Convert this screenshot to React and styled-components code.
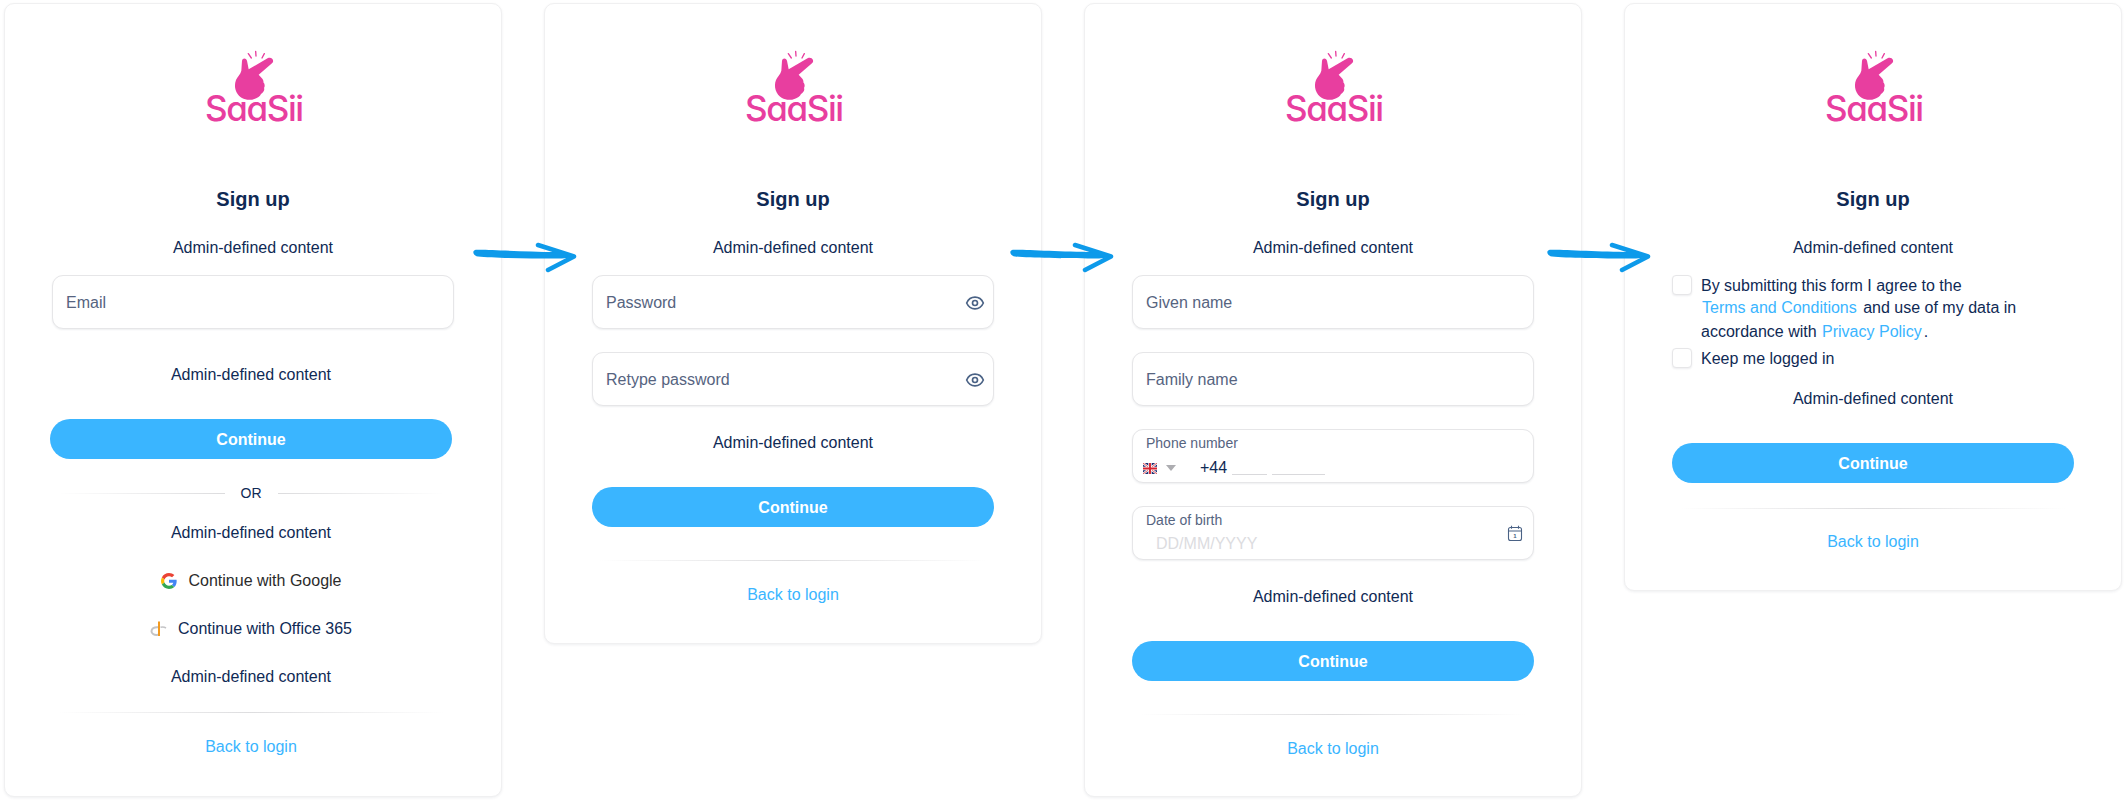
import React from "react";
import styled, { createGlobalStyle } from "styled-components";

const Global = createGlobalStyle`
  html, body { margin: 0; padding: 0; background: #fff; }
  body { font-family: "Liberation Sans", Arial, sans-serif; color: #0f2a55; }
  * { box-sizing: border-box; }
`;

const Page = styled.div`
  position: relative;
  display: flex;
  align-items: flex-start;
  gap: 42px;
  width: 2126px;
  height: 803px;
  padding: 3px 0 0 4px;
  overflow: hidden;
`;

const Card = styled.section`
  width: 498px;
  height: ${(p) => p.$h}px;
  flex: none;
  display: flex;
  flex-direction: column;
  padding: 0 47px;
  background: #fff;
  border: 1px solid #f0f0f1;
  border-radius: 10px;
  box-shadow: 0 1px 3px rgba(20, 30, 60, 0.07);
`;

const LogoBox = styled.div`
  margin-top: 46px;
  height: 72px;
  padding-left: 4px;
  display: flex;
  justify-content: center;
`;

const LogoInner = styled.div`
  position: relative;
  width: 150px;
  height: 90px;
  margin-top: -10px;
  flex: none;
`;

const LogoWord = styled.span`
  position: absolute;
  left: 25px;
  top: 46px;
  font-family: Inter, "Liberation Sans", sans-serif;
  font-feature-settings: "cv11" 1;
  font-size: 35px;
  line-height: 44px;
  font-weight: 500;
  letter-spacing: -1.4px;
  color: #e83e9f;
`;

const Title = styled.h1`
  margin: 63px 0 0;
  height: 28px;
  font-size: 20px;
  line-height: 28px;
  font-weight: 700;
  text-align: center;
  color: #0f2a55;
`;

const Note = styled.p`
  margin: ${(p) => p.$mt ?? 25}px 0 0;
  height: 20px;
  font-size: 16px;
  line-height: ${(p) => (p.$low ? 22 : 20)}px;
  text-align: center;
  color: #0f2a55;
`;

const Shifted = styled.div`
  display: flex;
  flex-direction: column;
  margin: 0 2px 0 -2px;
`;

const Field = styled.div`
  margin-top: ${(p) => p.$mt ?? 17}px;
  height: 54px;
  padding: 2px 13px 0;
  display: flex;
  align-items: center;
  justify-content: space-between;
  background: #fff;
  border: 1px solid #e6e6e8;
  border-radius: 11px;
  box-shadow: 0 1px 2px rgba(20, 30, 60, 0.07);
  font-size: 16px;
  color: #56647f;
`;

const Stacked = styled(Field)`
  display: grid;
  grid-template-columns: 1fr auto;
  align-content: start;
  align-items: start;
  padding-top: 5px;
`;

const Label = styled.div`
  grid-column: 1;
  height: 16px;
  font-size: 14px;
  line-height: 16px;
  color: #56647f;
`;

const PhoneRow = styled.div`
  grid-column: 1;
  margin: 7px 0 0 -3px;
  height: 20px;
  display: flex;
  align-items: center;
`;

const Caret = styled.span`
  width: 0;
  height: 0;
  margin: 0 24px 0 9px;
  border-left: 5px solid transparent;
  border-right: 5px solid transparent;
  border-top: 6px solid #adadb1;
`;

const Dial = styled.span`
  font-size: 16px;
  line-height: 20px;
  color: #0f2a55;
`;

const Blank = styled.span`
  width: ${(p) => p.$w}px;
  height: 1px;
  margin: 12px 0 0 ${(p) => p.$ml}px;
  background: #d9d9dc;
`;

const DateHint = styled.div`
  grid-column: 1;
  margin: 6px 0 0 10px;
  height: 20px;
  font-size: 16px;
  line-height: 20px;
  color: #dcdcdf;
`;

const CalendarSlot = styled.div`
  grid-column: 2;
  grid-row: 1 / span 2;
  margin-top: 13px;
  margin-right: -3px;
`;

const Cta = styled.button`
  margin-top: ${(p) => p.$mt ?? 35}px;
  height: 40px;
  width: 100%;
  padding: 2px 0 0;
  border: 0;
  border-radius: 20px;
  background: #3ab5ff;
  color: #fff;
  font-family: inherit;
  font-size: 16px;
  font-weight: 700;
`;

const OrRow = styled.div`
  margin: 24px 8px 0;
  height: 20px;
  display: flex;
  align-items: center;
  gap: 16px;
  font-size: 14px;
  color: #0f2a55;
`;

const OrLine = styled.span`
  flex: 1;
  height: 1px;
  background: linear-gradient(${(p) => (p.$flip ? "to left" : "to right")}, rgba(220, 220, 222, 0), #dcdcde);
`;

const Provider = styled.div`
  margin-top: 28px;
  height: 20px;
  padding-top: 2px;
  display: flex;
  align-items: center;
  justify-content: center;
  gap: ${(p) => p.$gap}px;
  font-size: 16px;
  line-height: 20px;
  color: ${(p) => p.$color};
`;

const Rule = styled.div`
  margin: ${(p) => p.$mt}px 8px 0;
  height: 1px;
  flex: none;
  background: linear-gradient(to right, rgba(220, 220, 222, 0), #dddddf 50%, rgba(220, 220, 222, 0));
`;

const Back = styled.a`
  display: block;
  margin-top: ${(p) => p.$mt ?? 23}px;
  height: 20px;
  font-size: 16px;
  line-height: 22px;
  text-align: center;
  color: #3ab5ff;
`;

const CheckRow = styled.div`
  margin-top: ${(p) => p.$mt}px;
  display: flex;
  align-items: flex-start;
  gap: 9px;
  font-size: 16px;
  line-height: 22px;
  color: #0f2a55;
`;

const Box = styled.span`
  flex: none;
  width: 20px;
  height: 20px;
  background: #fff;
  border: 1px solid #e6e6e8;
  border-radius: 4px;
  box-shadow: 0 1px 2px rgba(20, 30, 60, 0.08);
`;

const Terms = styled.div`
  flex: 1;
`;

const TermLink = styled.a`
  display: inline-block;
  margin: 0 2px 0 1px;
  padding-top: ${(p) => p.$top ?? 0}px;
  color: #3ab5ff;
`;

const ArrowSlot = styled.div`
  position: absolute;
  left: ${(p) => p.$x}px;
  top: 238px;
  width: 110px;
  height: 38px;
`;

const EyeIcon = styled.svg`
  flex: none;
  margin-right: -5px;
`;

const Logo = () => (
  <LogoInner>
    <svg width="150" height="90" viewBox="0 0 450 270" fill="none">
      <path
        fill="#e83e9f"
        d="M186 62C188 53 198 53 201 62L206 88L264 54C275 49 285 62 276 70L236 104L247 116C250 120 251 124 250 127C255 132 255 140 252 144C255 150 250 158 243 162C240 170 232 174 225 176C212 182 196 180 186 174C168 164 160 140 168 120C172 110 182 102 184 92Z"
      />
      <path stroke="#e83e9f" strokeWidth="4" strokeLinecap="round" d="M205 41L214 54M227 34L228 48M253 41L246 54" />
    </svg>
    <LogoWord>SaaSii</LogoWord>
  </LogoInner>
);

const Eye = () => (
  <EyeIcon width="20" height="20" viewBox="0 0 24 24" fill="none" stroke="#4a6285" strokeWidth="2">
    <path d="M2 12C4 7.5 7.5 5 12 5s8 2.5 10 7c-2 4.5-5.5 7-10 7s-8-2.5-10-7Z" />
    <circle cx="12" cy="12" r="3" />
  </EyeIcon>
);

const Calendar = () => (
  <svg width="16" height="17" viewBox="0 0 16 17" fill="none" stroke="#4a6285" strokeWidth="1.1">
    <rect x="1.5" y="2.5" width="13" height="13" rx="2" />
    <path d="M1.5 6h13M4.5 .8v3M11.5 .8v3" />
    <text x="8" y="13.4" textAnchor="middle" fontSize="6" fontWeight="700" fill="#4a6285" stroke="none" fontFamily="Liberation Sans">1</text>
  </svg>
);

const Flag = () => (
  <svg width="14" height="11" viewBox="0 0 14 11">
    <rect width="14" height="11" fill="#1f2f73" />
    <path d="M0 0L14 11M14 0L0 11" stroke="#fff" strokeWidth="2.2" />
    <path d="M0 0L14 11M14 0L0 11" stroke="#d8232f" strokeWidth=".8" />
    <path d="M7 0V11M0 5.5H14" stroke="#fff" strokeWidth="3.4" />
    <path d="M7 0V11M0 5.5H14" stroke="#d8232f" strokeWidth="1.9" />
  </svg>
);

const Google = () => (
  <svg width="16" height="16" viewBox="0 0 48 48">
    <path fill="#EA4335" d="M24 9.5c3.5 0 6.700 1.200 9.200 3.600l6.900-6.900C35.900 2.400 30.500 0 24 0 14.600 0 6.500 5.400 2.600 13.200l8 6.200C12.500 13.700 17.800 9.500 24 9.500z" />
    <path fill="#4285F4" d="M47 24.500c0-1.600-.1-3.100-.4-4.500H24v9h12.900c-.6 3-2.200 5.500-4.700 7.200l7.700 6c4.500-4.200 7.100-10.300 7.100-17.700z" />
    <path fill="#FBBC05" d="M10.500 28.600c-.5-1.500-.8-3-.8-4.600s.3-3.100.8-4.600l-8-6.200C.9 16.500 0 20.100 0 24s.9 7.500 2.600 10.800l7.900-6.200z" />
    <path fill="#34A853" d="M24 48c6.500 0 11.900-2.100 15.900-5.800l-7.700-6c-2.100 1.400-4.900 2.300-8.200 2.300-6.200 0-11.500-4.200-13.400-9.900l-8 6.200C6.500 42.600 14.600 48 24 48z" />
  </svg>
);

const Office = () => (
  <svg width="17" height="16" viewBox="0 0 17 16" fill="none">
    <path d="M8 6.200C4 5.800 1.500 7.700 1.500 10.300c0 2.500 2.500 4 6.500 3.500" stroke="#c4c4c6" strokeWidth="2" />
    <path d="M9 .5V15" stroke="#f39a1f" strokeWidth="2" />
    <path d="M10.500 6.300c2-.6 3.800-.4 5.500.7" stroke="#c4c4c6" strokeWidth="1.600" />
  </svg>
);

const Arrow = ({ x }) => (
  <ArrowSlot $x={x}>
    <svg width="110" height="38" viewBox="0 0 110 38" fill="none">
      <path fill="#0d9aea" d="M3 12C10 11 50 14 84 14C92 14 100 16 100 18C100 20 92 20.500 84 20.500C55 20.500 20 20 6 18.500C1 18 0 13 3 12Z" />
      <path stroke="#0d9aea" strokeWidth="4.500" strokeLinecap="round" strokeLinejoin="round" d="M66 7L102 18.500L76 32" />
    </svg>
  </ArrowSlot>
);

const Head = () => (
  <>
    <LogoBox>
      <Logo />
    </LogoBox>
    <Title>Sign up</Title>
    <Note>Admin-defined content</Note>
  </>
);

export default function App() {
  return (
    <Page>
      <Global />
      <Card $h={794}>
        <Head />
        <Field>Email</Field>
        <Shifted>
          <Note $mt={35} $low>Admin-defined content</Note>
          <Cta>Continue</Cta>
          <OrRow>
            <OrLine />
            OR
            <OrLine $flip />
          </OrRow>
          <Note $mt={19} $low>Admin-defined content</Note>
          <Provider $gap={12} $color="#2b2b2b">
            <Google />
            Continue with Google
          </Provider>
          <Provider $gap={11} $color="#0f2a55">
            <Office />
            Continue with Office 365
          </Provider>
          <Note $mt={28} $low>Admin-defined content</Note>
          <Rule $mt={26} />
          <Back>Back to login</Back>
        </Shifted>
      </Card>

      <Card $h={641}>
        <Head />
        <Field>
          Password
          <Eye />
        </Field>
        <Field $mt={23}>
          Retype password
          <Eye />
        </Field>
        <Note $mt={26} $low>Admin-defined content</Note>
        <Cta>Continue</Cta>
        <Rule $mt={33} />
        <Back>Back to login</Back>
      </Card>

      <Card $h={794}>
        <Head />
        <Field>Given name</Field>
        <Field $mt={23}>Family name</Field>
        <Stacked $mt={23}>
          <Label>Phone number</Label>
          <PhoneRow>
            <Flag />
            <Caret />
            <Dial>+44</Dial>
            <Blank $w={35} $ml={5} />
            <Blank $w={53} $ml={5} />
          </PhoneRow>
        </Stacked>
        <Stacked $mt={23}>
          <Label>Date of birth</Label>
          <DateHint>DD/MM/YYYY</DateHint>
          <CalendarSlot>
            <Calendar />
          </CalendarSlot>
        </Stacked>
        <Note $mt={27}>Admin-defined content</Note>
        <Cta $mt={34}>Continue</Cta>
        <Rule $mt={33} />
        <Back>Back to login</Back>
      </Card>

      <Card $h={588}>
        <Head />
        <CheckRow $mt={17}>
          <Box />
          <Terms>
            By submitting this form I agree to the <TermLink>Terms and Conditions</TermLink> and use of my data in
            accordance with <TermLink $top={2}>Privacy Policy</TermLink>.
          </Terms>
        </CheckRow>
        <CheckRow $mt={5}>
          <Box />
          Keep me logged in
        </CheckRow>
        <Note $mt={19}>Admin-defined content</Note>
        <Cta $mt={34}>Continue</Cta>
        <Rule $mt={25} />
        <Back $mt={22}>Back to login</Back>
      </Card>

      <Arrow x={472} />
      <Arrow x={1009} />
      <Arrow x={1546} />
    </Page>
  );
}
